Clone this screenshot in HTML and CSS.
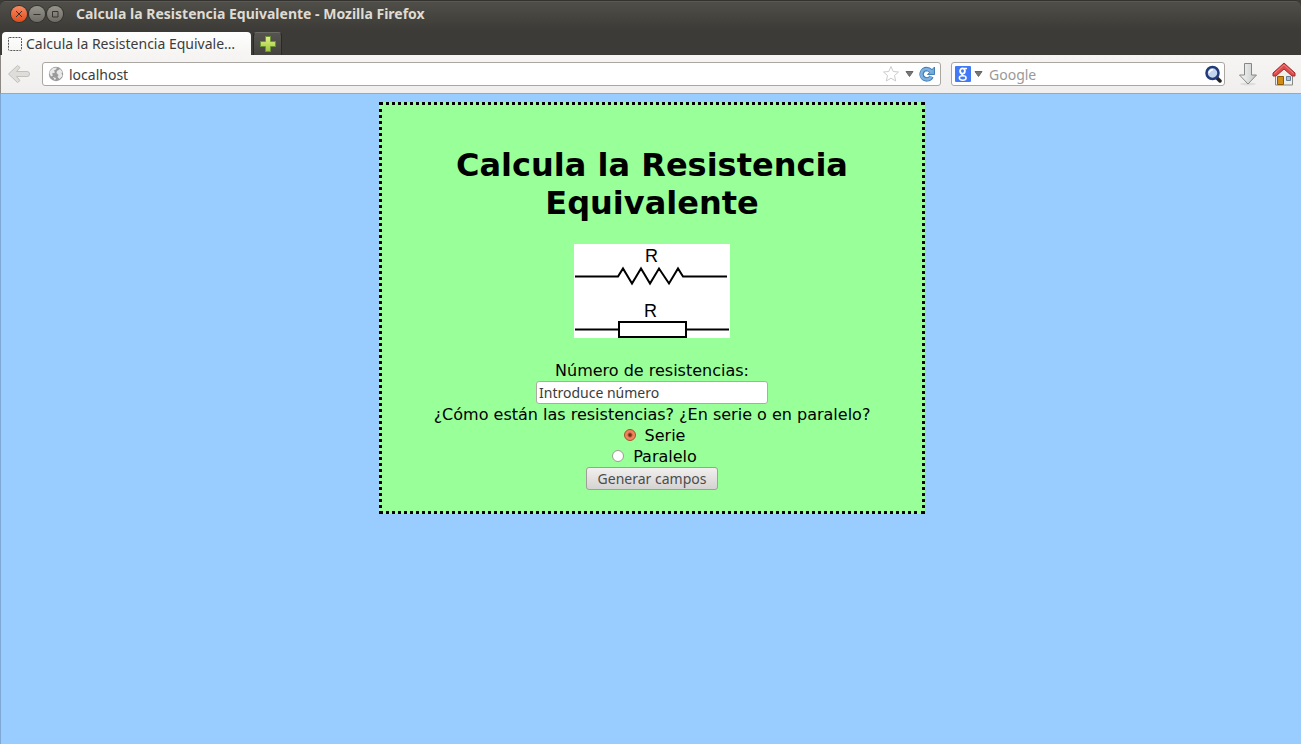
FILE: index.html
```html
<!DOCTYPE html>
<html lang="es">
<head>
<meta charset="utf-8">
<title>Calcula la Resistencia Equivalente</title>
<link rel="stylesheet" href="styles.css">
</head>
<body>
<div class="window">
  <header class="titlebar">
    <div class="window-buttons">
      <button class="window-button close" type="button" aria-label="Cerrar"><svg viewBox="0 0 16 16"><path d="M5 5l6 6M11 5l-6 6"/></svg></button>
      <button class="window-button" type="button" aria-label="Minimizar"><svg viewBox="0 0 16 16"><path d="M4.500 8.500h7"/></svg></button>
      <button class="window-button" type="button" aria-label="Maximizar"><svg viewBox="0 0 16 16"><path d="M5.500 5.500h5.500v5.500h-5.500z"/></svg></button>
    </div>
    <div class="window-title">Calcula la Resistencia Equivalente - Mozilla Firefox</div>
  </header>
  <nav class="tabs">
    <button class="tab" type="button">
      <svg class="favicon" viewBox="0 0 16 16"><rect x="1.500" y="1.500" width="13" height="13" rx="1" fill="none" stroke="#555" stroke-dasharray="2 1"/></svg>
      <span class="tab-label">Calcula la Resistencia Equivale…</span>
    </button>
    <button class="new-tab" type="button" aria-label="Nueva pestaña">
      <svg viewBox="0 0 16 16"><defs><linearGradient id="plus" x2="0" y2="1"><stop stop-color="#e4f08a"/><stop offset="1" stop-color="#9cc93a"/></linearGradient></defs><path d="M5.500.5h5v5h5v5h-5v5h-5v-5h-5v-5h5z" fill="url(#plus)" stroke="#6a9434"/></svg>
    </button>
  </nav>
  <div class="toolbar">
    <button class="tool back" type="button" aria-label="Atrás"><svg viewBox="0 0 24 20"><path d="M10.500 1.500L1.500 10l9 8.500 2.500-2-3.500-4H20q2.500 0 2.500-2.500T20 7.500H9.500L13 3.500z" fill="#deddda" stroke="#c2c0bc" stroke-linejoin="round"/></svg></button>
    <div class="field address">
      <svg class="glyph" viewBox="0 0 16 16"><circle cx="8" cy="8" r="7.200" fill="#9b9b9b"/><path d="M2 5l3-3 4-.5-1 2-2 1 1 2-3 1 1 2-2 1-1.500-3zM9 5l3-2 2.500 3-1 1 1 3-3 3-2-2 1-2-2-2zM5 11l3 1-1 2.500z" fill="#e9e9e9"/></svg>
      <input type="text" value="localhost" aria-label="Dirección">
      <svg class="glyph star" viewBox="0 0 18 18"><path d="M9 1.500l2.200 5 5.300.500-4 3.500 1.200 5.500L9 13.200 4.300 16l1.200-5.500-4-3.500 5.300-.500z" fill="#fff" stroke="#ccc" stroke-linejoin="round"/></svg>
      <svg class="caret" viewBox="0 0 9 6"><path d="M1 .5h7L4.500 5.500z" fill="#777" stroke="#666"/></svg>
      <svg class="glyph reload" viewBox="0 0 16 16"><path d="M12.500 10.500A5.200 5.200 0 1 1 7.500 3Q10 3 12 5" fill="none" stroke="#3f7fba" stroke-width="4.500"/><path d="M15.500 1v7.500H8.500z" fill="#6fa8d9" stroke="#3f7fba" stroke-linejoin="round"/><path d="M12.200 10.600A5.200 5.200 0 1 1 7.500 3Q10 3 13 6" fill="none" stroke="#7fb2de" stroke-width="2.500"/></svg>
    </div>
    <div class="field search">
      <svg class="glyph" viewBox="0 0 16 16"><rect width="16" height="16" rx="1" fill="#4179f6"/><g fill="none" stroke="#fff"><ellipse cx="7.500" cy="5" rx="2.400" ry="2.700" stroke-width="1.800"/><path d="M9 2.500h3M8 7.700c-2 .8-1 1.500.5 2" stroke-width="1.400"/><ellipse cx="7.700" cy="12" rx="3.400" ry="2.200" stroke-width="1.500"/></g></svg>
      <svg class="caret" viewBox="0 0 9 6"><path d="M1 .5h7L4.500 5.500z" fill="#777" stroke="#666"/></svg>
      <input type="text" placeholder="Google" aria-label="Buscar con Google">
      <svg class="glyph magnifier" viewBox="0 0 18 18"><path d="M13 13l3 3" stroke="#222" stroke-width="3.500" stroke-linecap="round"/><circle cx="8.500" cy="8" r="6" fill="#c3d4ee" stroke="#223a78" stroke-width="2.500"/><path d="M5.200 8A3.500 3.500 0 0 1 9 4.800" fill="none" stroke="#fff" stroke-width="1.500"/></svg>
    </div>
    <button class="tool download" type="button" aria-label="Descargas"><svg viewBox="0 0 20 24"><defs><linearGradient id="arrow"><stop stop-color="#f8f8f8"/><stop offset="1" stop-color="#c4c6c5"/></linearGradient></defs><ellipse cx="10" cy="22" rx="8" ry="1.500" fill="#ddd"/><path d="M6.500 1.500h7V13h5L10 22 1.500 13h5z" fill="url(#arrow)" stroke="#858886" stroke-linejoin="round"/></svg></button>
    <button class="tool home" type="button" aria-label="Inicio"><svg viewBox="0 0 24 24"><path d="M3.500 11L12 3l8.500 8v12h-17z" fill="#eeeeec" stroke="#888a85"/><path d="M5.500 14.500h6v8h-6z" fill="#d18b18" stroke="#8f5902"/><path d="M14.500 14.500h4v4h-4z" fill="#a9c1dc" stroke="#667d96"/><path d="M12 1L1 11v3h3l8-7 8 7h3v-3z" fill="#dc4b4b" stroke="#a52a2a" stroke-linejoin="round"/><path d="M2.500 11.500L12 2.800l9.500 8.700" fill="none" stroke="#ef8585"/></svg></button>
  </div>
  <main class="page">
    <form class="card">
      <h1 class="heading">Calcula la Resistencia Equivalente</h1>
      <svg class="diagram" viewBox="0 0 156 94" role="img" aria-label="Símbolos de la resistencia">
        <rect width="156" height="94" fill="#fff"/>
        <g fill="none" stroke="#000" stroke-width="2">
          <path d="M1 32.500H44l5-8 9 15 9-15 9 15 9-15 10 15 9-15 5 8h44"/>
          <path d="M1 85.500h43M113 85.500h42M45 78h67v15H45z"/>
        </g>
        <text class="symbol" x="71" y="18">R</text>
        <text class="symbol" x="70" y="73">R</text>
      </svg>
      <label class="line" for="count">Número de resistencias:</label>
      <input class="count" id="count" type="text" value="Introduce número">
      <fieldset class="choices">
        <legend class="line">¿Cómo están las resistencias? ¿En serie o en paralelo?</legend>
        <label class="choice"><input class="radio" type="radio" name="tipo" checked>Serie</label>
        <label class="choice"><input class="radio" type="radio" name="tipo">Paralelo</label>
      </fieldset>
      <button class="submit" type="button">Generar campos</button>
    </form>
  </main>
</div>
</body>
</html>
```
FILE: styles.css
```css
* { box-sizing: border-box; }

body {
  margin: 0;
  background: #3c3b37;
  font-family: "Noto Sans", "Open Sans", sans-serif;
  font-size: 14px;
  color: #3c3c3c;
}

button, input { font: inherit; color: inherit; }
button { padding: 0; border: 0; background: none; }
svg { display: block; flex: none; }

.window {
  min-height: 100vh;
  display: flex;
  flex-direction: column;
}

.titlebar {
  height: 30px;
  padding: 0 11px 3px;
  display: flex;
  align-items: center;
  gap: 13px;
  border-top: 1px solid #33322e;
  border-radius: 6px 6px 0 0;
  background: linear-gradient(#66645d 0, #504e48 1px, #3c3b37 100%);
}
.window-buttons { display: flex; gap: 2px; }
.window-button {
  width: 16px;
  height: 16px;
  border-radius: 50%;
  background: linear-gradient(#96948d, #6d6b65);
  box-shadow: 0 0 0 1px #33322e;
}
.window-button svg { fill: none; stroke: #35342f; }
.close { background: linear-gradient(#f58a62, #e24c1c); }
.window-title { font-weight: 700; font-size: 14px; line-height: 20px; color: #dfdbd2; }

.tabs {
  height: 25px;
  padding: 2px 2px 0;
  display: flex;
  gap: 2px;
  background: #3c3b37;
}
.tab {
  width: 249px;
  padding: 0 5px;
  display: flex;
  align-items: center;
  gap: 3px;
  border-radius: 4px 4px 0 0;
  background: linear-gradient(#fff, #f5f4f3);
}
.favicon { width: 16px; height: 16px; }
.tab-label { white-space: nowrap; }
.new-tab {
  width: 29px;
  display: grid;
  place-items: center;
  border: 1px solid #2a2926;
  border-top-color: #6b6a65;
  border-bottom: 0;
  border-radius: 4px 4px 0 0;
  background: linear-gradient(#55544f, #44433f);
}
.new-tab svg { width: 16px; height: 16px; }

.toolbar {
  height: 39px;
  padding: 0 5px 0 6px;
  display: flex;
  align-items: center;
  border-bottom: 1px solid #a9a6a1;
  border-left: 1px solid #8c8984;
  background: linear-gradient(#f6f5f4, #f0efed);
}
.tool { flex: none; }
.back { margin-right: 11px; }
.back svg { width: 24px; height: 20px; }
.download { margin: 0 14px 0 13px; }
.download svg { width: 20px; height: 24px; }
.home svg { width: 24px; height: 24px; }

.field {
  height: 24px;
  padding: 0 5px;
  display: flex;
  align-items: center;
  gap: 5px;
  border: 1px solid #aaa7a2;
  border-radius: 3px;
  background: #fff;
}
.field input {
  flex: 1;
  min-width: 0;
  padding: 0;
  border: 0;
  outline: 0;
  background: none;
}
.field input::placeholder { color: #999; opacity: 1; }
.address { flex: 1; margin-right: 10px; }
.search { width: 274px; padding: 0 2px 0 3px; gap: 3px; }
.search input { margin-left: 3px; }
.glyph { width: 16px; height: 16px; }
.star, .magnifier { width: 18px; height: 18px; }
.caret { width: 9px; height: 6px; }

.page {
  flex: 1;
  padding: 8px 6px 8px 8px;
  border-left: 1px solid #7fa9d4;
  background: #99ccff;
}
.card {
  width: 42.4%;
  margin: 0 auto;
  padding: 20px 20px 21px;
  display: flex;
  flex-direction: column;
  align-items: center;
  border: 3px dotted #000;
  background: #99ff99;
  font-family: "DejaVu Sans", sans-serif;
  font-size: 16px;
  line-height: 21px;
  text-align: center;
  color: #000;
}
.heading { margin: 21px 0 22px; font-size: 32px; line-height: 38px; }
.diagram { width: 156px; height: 94px; margin-bottom: 22px; }
.symbol { font: 18px "Liberation Sans", sans-serif; }
.line { padding: 0; }
.count {
  width: 232px;
  height: 23px;
  padding: 0 2px;
  border: 1px solid #b0aaa5;
  border-radius: 3px;
  background: #fff;
  font: 14px "Noto Sans", sans-serif;
  color: #3c3c3c;
}
.choices {
  min-width: 0;
  margin: 0;
  padding: 0;
  border: 0;
}
.choice {
  padding-left: 5px;
  display: flex;
  align-items: center;
  justify-content: center;
  gap: 9px;
}
.radio {
  appearance: none;
  width: 12px;
  height: 12px;
  margin: 0 0 2px;
  border: 1px solid #a09a94;
  border-radius: 50%;
  background: #fff;
}
.radio:checked {
  border-color: #a84e2c;
  background: radial-gradient(circle, #6b2c18 0 1px, #f0835c 3px);
}
.submit {
  height: 23px;
  padding: 0 11px;
  border: 1px solid #a39e99;
  border-radius: 3px;
  background: linear-gradient(#f1f0ef, #d5d3d1);
  font: 14px "Noto Sans", sans-serif;
  color: #4c4c4c;
}
```
